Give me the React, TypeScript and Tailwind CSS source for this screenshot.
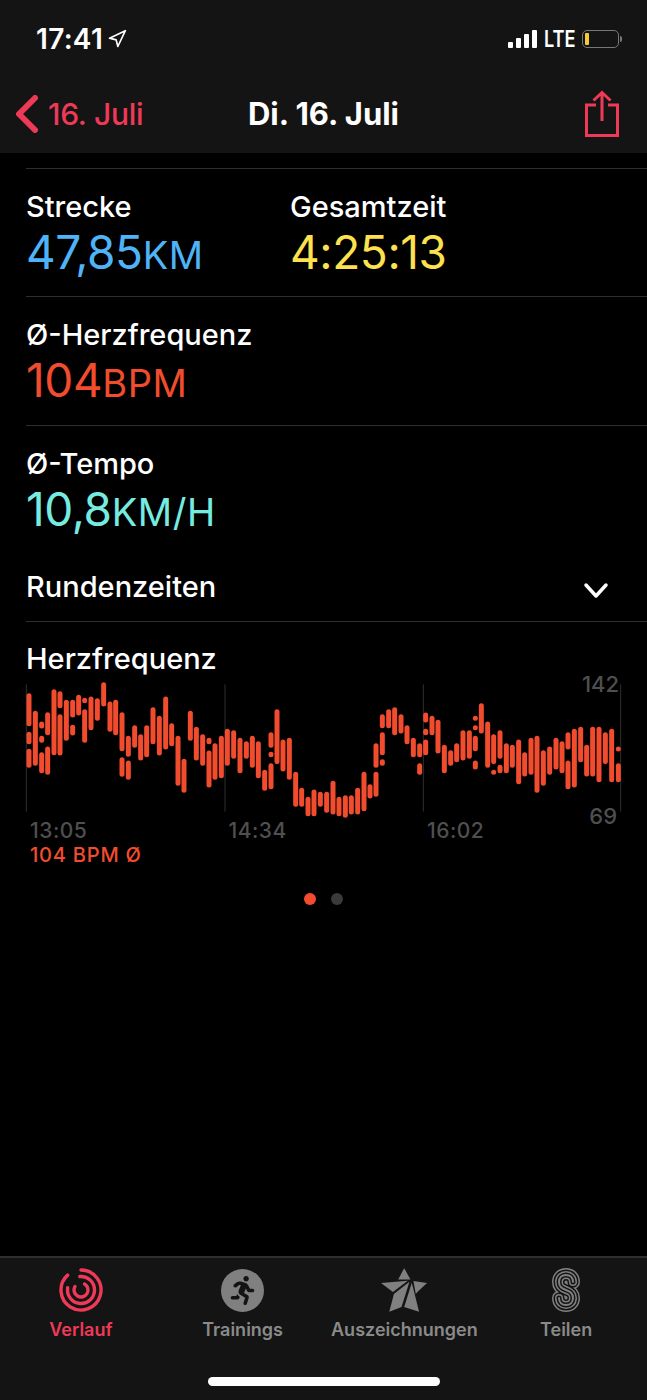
import React from "react";
import { Navigation } from "lucide-react";
import { FaRunning } from "react-icons/fa";

// [x, top, bottom] measured at 3x, chart origin is page x=0 / y=670
const BARS: number[][] = [
  [87, 70, 168], [87, 186, 222], [87, 237, 293], [106, 123, 287], [125, 155, 175], [125, 198, 218], [125, 247, 309],
  [143, 127, 195], [143, 230, 314], [162, 58, 255], [180, 64, 114], [180, 133, 256], [199, 90, 212], [218, 90, 142],
  [218, 165, 196], [236, 75, 136], [254, 84, 99], [254, 118, 218], [273, 80, 180], [292, 85, 152], [311, 37, 109],
  [330, 95, 185], [347, 90, 195], [366, 127, 243], [366, 262, 320], [385, 198, 260], [385, 272, 329], [404, 166, 233],
  [422, 193, 271], [440, 166, 261], [459, 112, 222], [478, 138, 256], [497, 80, 238], [515, 160, 228], [534, 198, 347],
  [552, 267, 368], [571, 123, 212], [589, 171, 271], [608, 193, 287], [627, 204, 222], [627, 242, 352], [645, 220, 329],
  [664, 198, 324], [682, 177, 287], [701, 181, 266], [720, 204, 309], [739, 214, 266], [757, 198, 293], [775, 214, 324],
  [794, 300, 362], [813, 187, 233], [813, 246, 261], [813, 280, 357], [831, 118, 282], [849, 209, 304], [868, 204, 329],
  [887, 306, 410], [905, 354, 410], [924, 381, 438], [942, 359, 438], [961, 366, 410], [980, 366, 428],
  [999, 333, 433], [1017, 381, 438], [1036, 376, 443], [1054, 376, 433], [1073, 354, 433], [1092, 306, 423],
  [1110, 343, 385], [1128, 306, 380], [1128, 220, 293], [1147, 133, 174], [1147, 187, 255], [1147, 268, 287],
  [1166, 118, 174], [1184, 112, 195], [1203, 133, 190], [1221, 166, 222], [1240, 204, 261], [1259, 220, 261],
  [1259, 280, 314], [1277, 128, 157], [1277, 177, 195], [1277, 209, 255], [1296, 138, 195], [1314, 150, 250],
  [1333, 225, 309], [1352, 241, 287], [1370, 220, 276], [1389, 181, 271], [1408, 181, 266], [1426, 138, 152],
  [1426, 166, 180], [1426, 198, 243], [1426, 272, 298], [1444, 100, 190], [1463, 155, 293], [1481, 193, 282],
  [1481, 300, 314], [1500, 181, 266], [1500, 285, 309], [1519, 220, 309], [1537, 225, 293], [1556, 209, 342],
  [1574, 247, 319], [1593, 204, 314], [1611, 198, 368], [1630, 241, 347], [1649, 230, 314], [1668, 204, 298],
  [1686, 214, 309], [1704, 187, 238], [1704, 272, 357], [1723, 177, 352], [1742, 171, 276], [1760, 225, 319],
  [1778, 171, 319], [1797, 171, 336], [1816, 187, 282], [1835, 177, 336], [1855, 230, 244], [1855, 280, 336],
];

const arc = (cx: number, cy: number, r: number, from: number, to: number) => {
  const pt = (deg: number) => {
    const a = ((deg - 90) * Math.PI) / 180;
    return `${cx + r * Math.cos(a)} ${cy + r * Math.sin(a)}`;
  };
  return `M${pt(from)} A${r} ${r} 0 ${to - from > 180 ? 1 : 0} 1 ${pt(to)}`;
};

const HeartChart = () => (
  <svg viewBox="78 42 1788 384" className="block w-[596px] h-[128px] overflow-visible">
    {[79, 675, 1270, 1862].map((x) => (
      <line key={x} x1={x} x2={x} y1={43} y2={425} stroke="#2f2f2f" strokeWidth={3} />
    ))}
    {BARS.map(([x, top, bottom], i) => (
      <line key={i} x1={x} x2={x} y1={top + 7} y2={bottom - 7} stroke="#f24c2f" strokeWidth={15} strokeLinecap="round" />
    ))}
  </svg>
);

const Metric = ({ label, value, unit, color, className }: { label: string; value: string; unit?: string; color: string; className?: string }) => (
  <div className={className}>
    <div className="text-[29px] leading-[34px] font-medium text-white">{label}</div>
    <div className={`text-[46px] leading-[56px] font-normal tracking-[-0.4px] ${color}`}>
      {value}
      {unit && <span className="text-[38px] leading-none font-normal tracking-[0.6px]">{unit}</span>}
    </div>
  </div>
);

const Tab = ({ label, active, children }: { label: string; active?: boolean; children: React.ReactNode }) => (
  <div className={`flex flex-col items-center ${active ? "text-[#ee3a57]" : "text-[#8a8a8a]"}`}>
    <div className="h-[46px] flex items-center justify-center">{children}</div>
    <div className="mt-[6px] text-[18px] leading-[22px] font-semibold">{label}</div>
  </div>
);

export default function App() {
  return (
    <div className="h-[1400px] w-[647px] flex flex-col bg-black overflow-hidden font-['Inter',sans-serif]">
      <header className="h-[153px] shrink-0 bg-[#141414] text-white">
        <div className="h-[78px] flex items-center pl-[36px] pr-[25px]">
          <span className="text-[28px] font-semibold leading-none tracking-[0.3px]">17:41</span>
          <Navigation size={20} strokeWidth={2} className="ml-[4px]" />
          <div className="ml-auto flex items-center">
            <div className="flex items-end gap-[2.5px] h-[18px]">
              <span className="w-[5.500px] h-[6px] rounded-[1px] bg-white" />
              <span className="w-[5.500px] h-[10px] rounded-[1px] bg-white" />
              <span className="w-[5.500px] h-[14px] rounded-[1px] bg-white" />
              <span className="w-[5.500px] h-[18px] rounded-[1px] bg-white" />
            </div>
            <span className="ml-[7px] w-[31px] origin-left scale-x-[0.79] text-[23px] font-semibold leading-none">LTE</span>
            <div className="ml-[7px] w-[37px] h-[18px] rounded-[5px] border border-[#777] p-[2px]">
              <div className="w-[4px] h-full rounded-[1px] bg-[#f7c936]" />
            </div>
            <div className="ml-[1px] w-[2px] h-[6px] rounded-r bg-[#777]" />
          </div>
        </div>
        <div className="relative h-[70px] flex items-center justify-center">
          <div className="absolute left-[15px] top-[17px] flex items-center text-[#ee3a57]">
            <svg width="24" height="38" viewBox="0 0 24 38" fill="none">
              <path d="M20 3 L4 19 L20 35" stroke="currentColor" strokeWidth="6" strokeLinecap="round" strokeLinejoin="round" />
            </svg>
            <span className="ml-[9px] text-[30px] font-medium tracking-[-0.3px] leading-none">16. Juli</span>
          </div>
          <span className="text-[31px] font-bold leading-none">Di. 16. Juli</span>
          <svg className="absolute left-[584px] top-[12px]" width="36" height="48" viewBox="0 0 36 48" fill="none" stroke="#ee3a57" strokeWidth="3">
            <path d="M12 15 H2.5 V45.5 H33.5 V15 H24" />
            <path d="M18 31 V3 M9.5 10.5 L18 2.5 L26.5 10.5" />
          </svg>
        </div>
      </header>

      <main className="flex-1 pt-[15px]">
        <section className="ml-[26px] border-t border-[#2e2e2e] pt-[21px] pb-[16px] flex">
          <Metric className="w-[264px]" label="Strecke" value="47,85" unit="KM" color="text-[#4fb4f7]" />
          <Metric label="Gesamtzeit" value="4:25:13" color="text-[#fde14e]" />
        </section>
        <section className="ml-[26px] border-t border-[#2e2e2e] pt-[21px] pb-[17px]">
          <Metric label="Ø-Herzfrequenz" value="104" unit="BPM" color="text-[#f24c2f]" />
        </section>
        <section className="ml-[26px] border-t border-[#2e2e2e] pt-[21px]">
          <Metric label="Ø-Tempo" value="10,8" unit="KM/H" color="text-[#76ece0]" />
          <div className="h-[84px] pt-[33px] flex items-start justify-between pr-[38px]">
            <span className="text-[29px] leading-[34px] font-medium text-white">Rundenzeiten</span>
            <svg className="mt-[12px]" width="26" height="18" viewBox="0 0 26 18" fill="none">
              <path d="M3 3 L13 14 L23 3" stroke="white" strokeWidth="3.5" strokeLinecap="round" strokeLinejoin="round" />
            </svg>
          </div>
        </section>
        <section className="ml-[26px] border-t border-[#2e2e2e] pt-[20px]">
          <div className="text-[29px] leading-[34px] font-medium text-white">Herzfrequenz</div>
          <div className="relative mt-[8px]">
            <HeartChart />
            <span className="absolute right-[28px] top-[-12px] text-[22px] leading-[24px] font-medium text-[#4f4f4f]">142</span>
            <span className="absolute right-[30px] top-[120px] text-[22px] leading-[24px] font-medium text-[#4f4f4f]">69</span>
          </div>
          <div className="grid grid-cols-[198.500px_198.500px_1fr] pl-[4px] mt-[7px] text-[21px] leading-[24px] font-medium tracking-[0.5px] text-[#4f4f4f]">
            <span>13:05</span>
            <span>14:34</span>
            <span>16:02</span>
          </div>
          <div className="pl-[4px] text-[20px] leading-[24px] font-medium tracking-[0.8px] text-[#f24c2f]">104 BPM Ø</div>
          <div className="ml-[-26px] mt-[26px] flex justify-center gap-[15px]">
            <span className="w-[12px] h-[12px] rounded-full bg-[#f24c2f]" />
            <span className="w-[12px] h-[12px] rounded-full bg-[#3a3a3a]" />
          </div>
        </section>
      </main>

      <footer className="relative h-[144px] shrink-0 bg-[#141414] border-t-2 border-[#2e2e2e]">
        <div className="grid grid-cols-4 pt-[9px]">
          <Tab label="Verlauf" active>
            <svg width="44" height="44" viewBox="0 0 44 44" fill="none" stroke="currentColor" strokeWidth="3.4" strokeLinecap="round">
              <path d={arc(22, 22, 20, 0, 318)} />
              <path d={arc(22, 22, 13.5, 355, 640)} />
              <path d={arc(22, 22, 7, 30, 300)} />
            </svg>
          </Tab>
          <Tab label="Trainings">
            <div className="w-[43px] h-[43px] rounded-full bg-[#808080] flex items-center justify-center">
              <FaRunning size={29} className="text-[#141414]" />
            </div>
          </Tab>
          <Tab label="Auszeichnungen">
            <svg width="48" height="47" viewBox="180 52 145 141" fill="#808080">
              <polygon points="253,55 272,89 235,89" />
              <polygon points="183,100 264,93 219,127" />
              <polygon points="208,187 222,133 269,96 245,172" />
              <polygon points="253,172 276,99 298,187" />
              <polygon points="281,94 322,100 293,127 288,133" />
            </svg>
          </Tab>
          <Tab label="Teilen">
            <svg width="28" height="44" viewBox="0 0 28 44" fill="none" strokeLinecap="round">
              {[
                ["#808080", 14],
                ["#141414", 11],
                ["#808080", 8],
                ["#141414", 5],
                ["#808080", 2],
              ].map(([color, w]) => (
                <path
                  key={w}
                  d="M21 14 C21 9.500 18 7 14 7 C10 7 7 9.500 7 14 C7 19 10 20.500 14 22 C18 23.500 21 25 21 30 C21 34.500 18 37 14 37 C10 37 7 34.500 7 30"
                  stroke={color as string}
                  strokeWidth={w}
                />
              ))}
            </svg>
          </Tab>
        </div>
        <div className="absolute left-[208px] bottom-[14px] w-[232px] h-[9px] rounded-full bg-white" />
      </footer>
    </div>
  );
}
